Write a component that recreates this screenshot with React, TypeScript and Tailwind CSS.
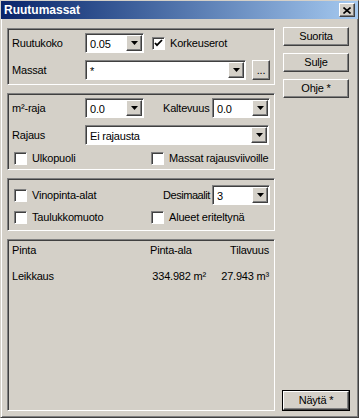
import React from 'react';

const raised =
  'border border-t-white border-l-white border-r-[#404040] border-b-[#404040] shadow-[inset_-1px_-1px_0_#808080]';
const sunken =
  'border border-t-[#808080] border-l-[#808080] border-r-white border-b-white shadow-[inset_1px_1px_0_#404040]';

function Arrow() {
  return (
    <div className={`w-[16px] h-full flex items-center justify-center bg-[#d4d0c8] ${raised}`}>
      <svg width="7" height="4" viewBox="0 0 7 4">
        <path d="M0 0h7L3.5 4z" fill="#000" />
      </svg>
    </div>
  );
}

function Combo({ value, width }: { value: string; width: string }) {
  return (
    <div className={`h-[20px] shrink-0 ${width} bg-white flex items-stretch p-[1px] ${sunken}`}>
      <div className="flex-1 pl-[3px] pt-[1px] leading-[16px]">{value}</div>
      <Arrow />
    </div>
  );
}

function Check({ checked, label }: { checked?: boolean; label: string }) {
  return (
    <div className="flex items-center gap-[5px]">
      <div className={`w-[13px] h-[13px] shrink-0 bg-white flex items-center justify-center ${sunken}`}>
        {checked && (
          <svg width="9" height="9" viewBox="0 0 9 9">
            <path d="M1 4l2 2.2L8 1" stroke="#000" strokeWidth="1.8" fill="none" />
          </svg>
        )}
      </div>
      <span>{label}</span>
    </div>
  );
}

function Btn({ label, def }: { label: string; def?: boolean }) {
  return (
    <div
      className={`w-[66px] h-[19px] bg-[#d4d0c8] flex items-center justify-center ${
        def ? 'outline outline-1 outline-black' : ''
      } ${raised}`}
    >
      {label}
    </div>
  );
}

function Group({ className, children }: { className: string; children: React.ReactNode }) {
  return <div className={`w-[268px] ${sunken} ${className}`}>{children}</div>;
}

export default function App() {
  return (
    <div
      className="w-[359px] h-[418px] bg-[#d4d0c8] flex flex-col text-[11px] tracking-[-0.2px] text-black whitespace-nowrap border border-t-[#d4d0c8] border-l-[#d4d0c8] border-r-[#404040] border-b-[#404040] shadow-[inset_1px_1px_0_white,inset_-1px_-1px_0_#808080]"
      style={{ fontFamily: '"Liberation Sans", Arial, sans-serif' }}
    >
      {/* title bar */}
      <div className="h-[18px] bg-gradient-to-r from-[#0a246a] to-[#a6caf0] flex items-center justify-between pl-[3px] pr-[3px]">
        <span className="text-white font-bold text-[12px] tracking-normal">Ruutumassat</span>
        <div className={`w-[16px] h-[14px] bg-[#d4d0c8] flex items-center justify-center ${raised}`}>
          <svg width="8" height="7" viewBox="0 0 8 7">
            <path d="M0.5 0.5l7 6M7.5 0.5l-7 6" stroke="#000" strokeWidth="1.6" />
          </svg>
        </div>
      </div>

      <div className="flex flex-1 pl-[6px] pt-[9px] pb-[6px]">
        {/* left column */}
        <div className="flex flex-col gap-[8px]">
          <Group className="h-[57px] pl-[4px] pr-[3px] pt-[4px] flex flex-col gap-[7px]">
            <div className="flex items-center">
              <span className="w-[73px] shrink-0">Ruutukoko</span>
              <Combo value="0.05" width="w-[59px]" />
              <div className="ml-[8px]">
                <Check checked label="Korkeuserot" />
              </div>
            </div>
            <div className="flex items-center">
              <span className="w-[73px] shrink-0">Massat</span>
              <Combo value="*" width="w-[161px]" />
              <div className={`ml-[6px] w-[18px] h-[20px] flex items-end justify-center pb-[3px] leading-none ${raised}`}>
                ...
              </div>
            </div>
          </Group>

          <Group className="h-[77px] pl-[4px] pr-[4px] pt-[4px] flex flex-col">
            <div className="flex items-center">
              <span className="w-[73px] shrink-0">m²-raja</span>
              <Combo value="0.0" width="w-[59px]" />
              <span className="ml-[19px] w-[49px] shrink-0">Kaltevuus</span>
              <Combo value="0.0" width="w-[58px]" />
            </div>
            <div className="flex items-center mt-[7px]">
              <span className="w-[73px] shrink-0">Rajaus</span>
              <Combo value="Ei rajausta" width="w-[184px]" />
            </div>
            <div className="flex items-center mt-[5px] pl-[2px]">
              <div className="w-[137px] shrink-0">
                <Check label="Ulkopuoli" />
              </div>
              <Check label="Massat rajausviivoille" />
            </div>
          </Group>

          <Group className="h-[53px] pl-[6px] pr-[4px] pt-[6px] flex flex-col">
            <div className="flex items-center">
              <div className="w-[149px] shrink-0">
                <Check label="Vinopinta-alat" />
              </div>
              <span className="w-[49px] shrink-0 tracking-[-0.45px]">Desimaalit</span>
              <Combo value="3" width="w-[58px]" />
            </div>
            <div className="flex items-center mt-[4px]">
              <div className="w-[137px] shrink-0">
                <Check label="Taulukkomuoto" />
              </div>
              <Check label="Alueet eriteltynä" />
            </div>
          </Group>

          <Group className="flex-1 pl-[4px] pr-[5px] pt-[3px]">
            <div className="flex h-[14px] items-center">
              <span className="w-[138px] shrink-0">Pinta</span>
              <span className="w-[58px] shrink-0">Pinta-ala</span>
              <span className="flex-1 text-right">Tilavuus</span>
            </div>
            <div className="flex h-[14px] items-center mt-[12px]">
              <span className="w-[96px] shrink-0">Leikkaus</span>
              <span className="w-[98px] shrink-0 text-right">334.982 m²</span>
              <span className="flex-1 text-right">27.943 m³</span>
            </div>
          </Group>
        </div>

        {/* right column */}
        <div className="flex flex-col ml-[8px] pb-[1px]">
          <div className="flex flex-col gap-[7px] -mt-[1px]">
            <Btn label="Suorita" />
            <Btn label="Sulje" />
            <Btn label="Ohje *" />
          </div>
          <div className="mt-auto">
            <Btn label="Näytä *" def />
          </div>
        </div>
      </div>
    </div>
  );
}
